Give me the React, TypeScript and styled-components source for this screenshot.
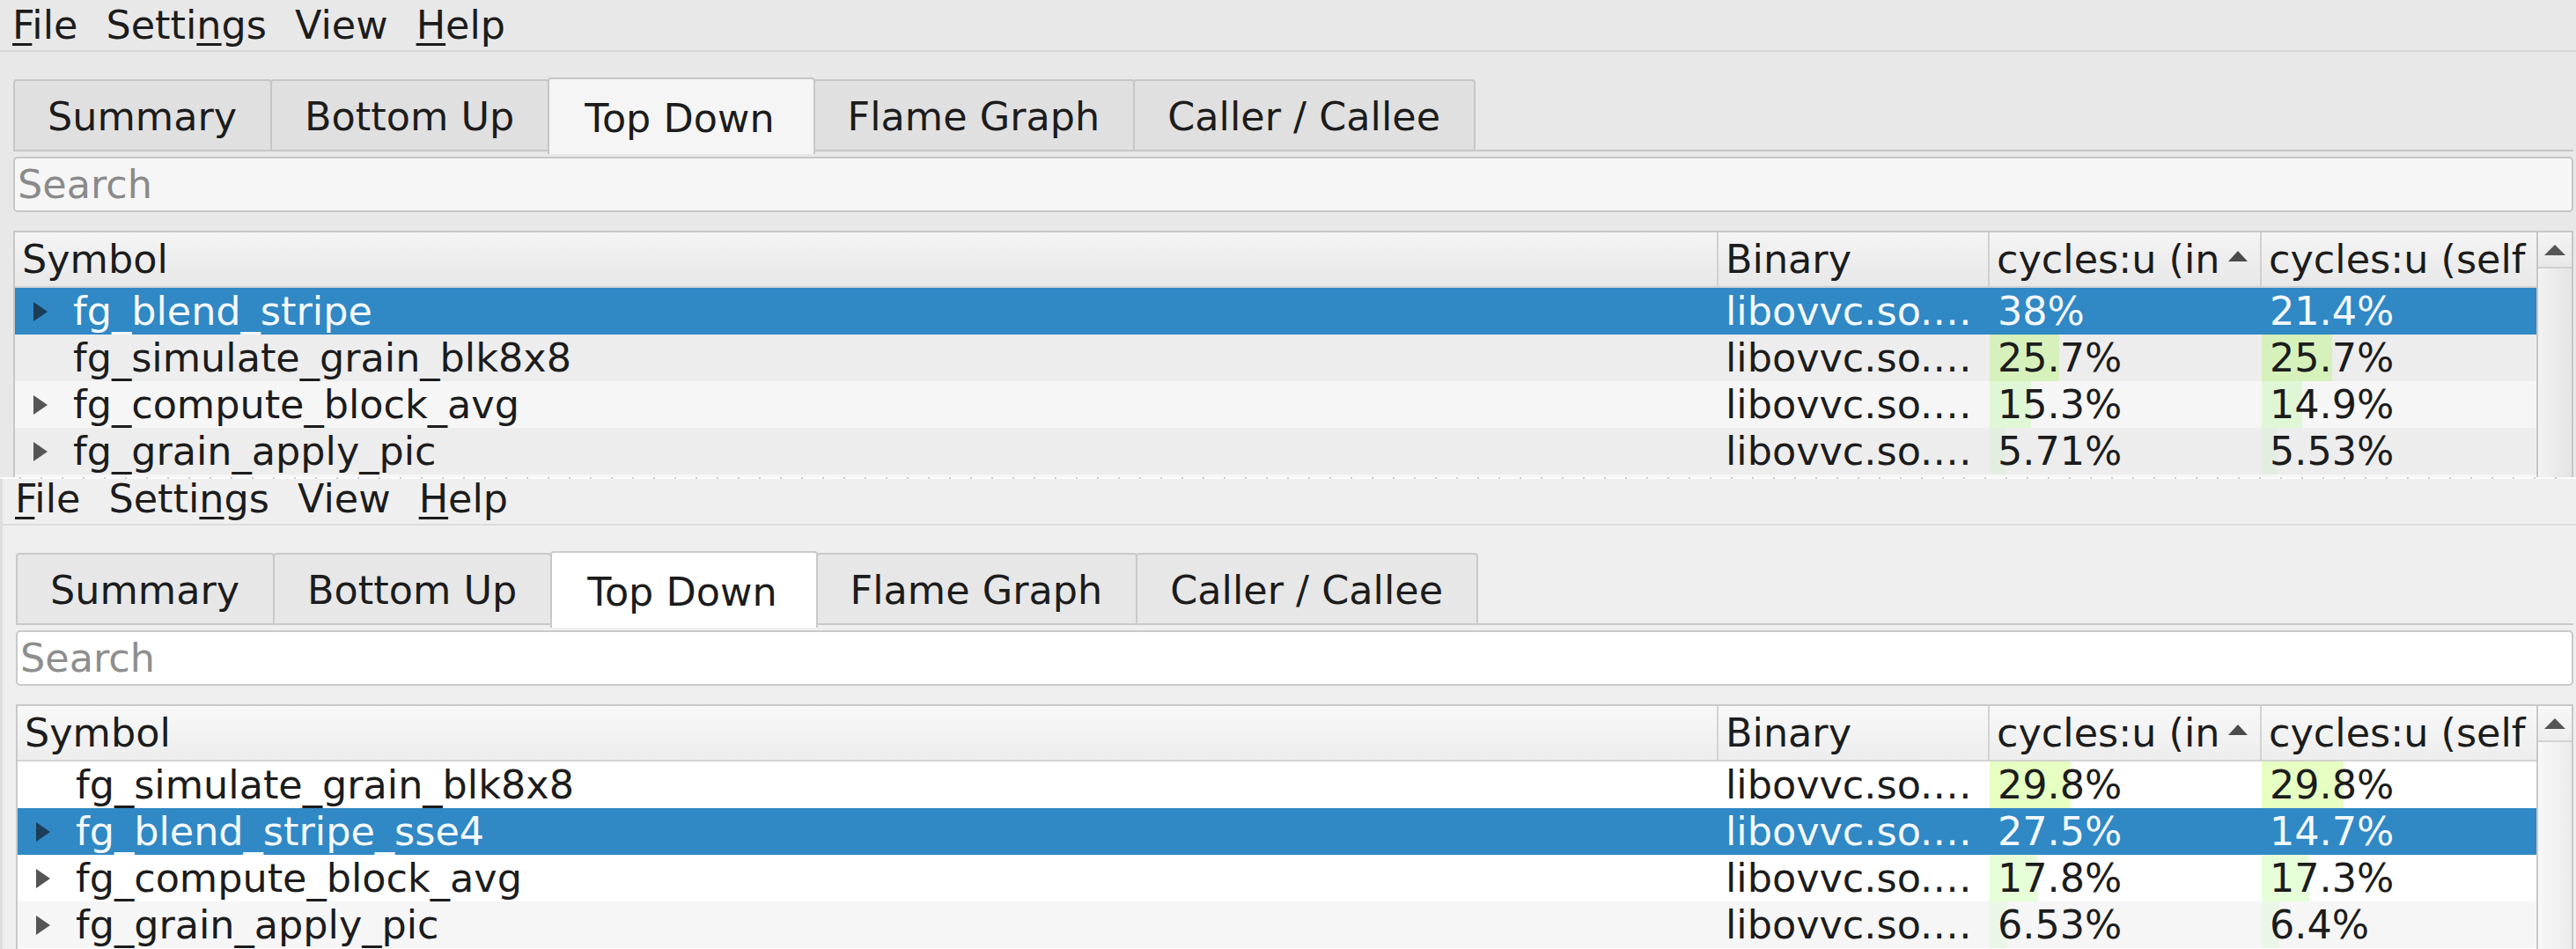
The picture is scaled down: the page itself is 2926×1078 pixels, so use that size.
import React from "react";
import styled, { createGlobalStyle, ThemeProvider } from "styled-components";

type Palette = {
  bg: string;
  menuLine: string;
  tab: string;
  tabActive: string;
  frame: string;
  search: string;
  placeholder: string;
  headTop: string;
  headBottom: string;
  divider: string;
  rowBase: string;
  rowAlt: string;
  text: string;
  trackA: string;
  trackB: string;
};

const dimPalette: Palette = {
  bg: "#e8e8e8",
  menuLine: "#d6d6d6",
  tab: "#e0e0e0",
  tabActive: "#f5f5f5",
  frame: "#c6c6c6",
  search: "#f6f6f6",
  placeholder: "#8a8a8a",
  headTop: "#f4f4f4",
  headBottom: "#e8e8e8",
  divider: "#d0d0d0",
  rowBase: "#f6f6f6",
  rowAlt: "#ededed",
  text: "#1c1c1c",
  trackA: "#f2f2f2",
  trackB: "#e4e4e4",
};

const brightPalette: Palette = {
  bg: "#efefef",
  menuLine: "#dcdcdc",
  tab: "#e7e7e7",
  tabActive: "#ffffff",
  frame: "#c9c9c9",
  search: "#ffffff",
  placeholder: "#8e8e8e",
  headTop: "#f8f8f8",
  headBottom: "#ededed",
  divider: "#d3d3d3",
  rowBase: "#ffffff",
  rowAlt: "#f6f6f6",
  text: "#1c1c1c",
  trackA: "#f8f8f8",
  trackB: "#ececec",
};

const GlobalStyle = createGlobalStyle`
  * { box-sizing: border-box; }
  html, body { margin: 0; padding: 0; background: #efefef; }
  body {
    width: 2926px;
    height: 1078px;
    overflow: hidden;
    font-family: "DejaVu Sans", "Liberation Sans", sans-serif;
    font-size: 44.5px;
  }
`;

const Page = styled.div`
  width: 2926px;
  height: 1078px;
  display: flex;
  flex-direction: column;
  overflow: hidden;
  background: #efefef;
`;

const PaneClip = styled.div<{ $height: number; $inset?: boolean }>`
  height: ${(p) => p.$height}px;
  overflow: hidden;
  flex-shrink: 0;
  border-left: ${(p) => (p.$inset ? "3px solid #dddddd" : "none")};
`;

const Seam = styled.div`
  height: 2px;
  flex-shrink: 0;
  background: repeating-linear-gradient(
    90deg,
    #fbfbfb 0 22px,
    #cdcdcd 22px 24px
  );
`;

const WindowFrame = styled.div<{ $shift: number }>`
  margin-top: ${(p) => p.$shift}px;
  display: flex;
  flex-direction: column;
  background: ${(p) => p.theme.bg};
  color: ${(p) => p.theme.text};
  font-family: "DejaVu Sans", "Liberation Sans", sans-serif;
  font-size: 44.5px;
`;

const MenuBar = styled.div`
  height: 59px;
  display: flex;
  align-items: center;
  line-height: 57px;
  padding-left: 0;
  border-bottom: 2px solid ${(p) => p.theme.menuLine};
`;

const MenuItem = styled.span`
  padding: 0 16px;
  white-space: nowrap;
  &:first-child {
    padding-left: 14px;
  }
`;

const Mnemonic = styled.span`
  text-decoration: underline;
  text-decoration-thickness: 3px;
  text-underline-offset: 5px;
`;

const Body = styled.div`
  display: flex;
  flex-direction: column;
  padding: 0 3px 0 15px;
`;

const TabBar = styled.div`
  display: flex;
  align-items: flex-start;
  padding-top: 31px;
  height: 116px;
`;

const Tab = styled.div<{ $active?: boolean }>`
  position: relative;
  flex-shrink: 0;
  height: ${(p) => (p.$active ? 87 : 82)}px;
  margin-top: ${(p) => (p.$active ? -2 : 0)}px;
  padding: ${(p) => (p.$active ? "4px 44px 0 40px" : "3px 38px 0 37px")};
  display: flex;
  align-items: center;
  white-space: nowrap;
  background: ${(p) => (p.$active ? p.theme.tabActive : p.theme.tab)};
  border: 2px solid ${(p) => p.theme.frame};
  border-bottom: ${(p) => (p.$active ? "none" : `2px solid ${p.theme.frame}`)};
  border-radius: 4px 4px 0 0;
  z-index: ${(p) => (p.$active ? 1 : 0)};
  & + & {
    margin-left: -2px;
  }
`;

const TabFiller = styled.div`
  flex: 1;
  height: 82px;
  border-bottom: 2px solid ${(p) => p.theme.frame};
`;

const SearchField = styled.input`
  margin-top: 3px;
  height: 63px;
  width: 100%;
  border: 2px solid ${(p) => p.theme.frame};
  border-radius: 5px;
  background: ${(p) => p.theme.search};
  padding: 0 3px;
  font-family: "DejaVu Sans", "Liberation Sans", sans-serif;
  font-size: 44.5px;
  color: ${(p) => p.theme.text};
  outline: none;
  &::placeholder {
    color: ${(p) => p.theme.placeholder};
  }
`;

const TableFrame = styled.div`
  margin-top: 21px;
  display: flex;
  border-top: 2px solid ${(p) => p.theme.frame};
  border-left: 2px solid ${(p) => p.theme.frame};
  height: 330px;
`;

const TreeView = styled.div`
  flex: 1;
  min-width: 0;
  display: flex;
  flex-direction: column;
  background: ${(p) => p.theme.rowBase};
`;

const columns = "minmax(0, 1fr) 308px 309px 312px";

const HeaderRow = styled.div`
  display: grid;
  grid-template-columns: ${columns};
  height: 63px;
  border-bottom: 2px solid ${(p) => p.theme.divider};
  background: linear-gradient(${(p) => p.theme.headTop}, ${(p) => p.theme.headBottom});
`;

const HeaderCell = styled.div`
  display: flex;
  align-items: center;
  justify-content: space-between;
  padding-left: 8px;
  white-space: nowrap;
  overflow: hidden;
  border-right: 2px solid ${(p) => p.theme.divider};
  &:last-child {
    border-right: none;
  }
`;

const SortArrow = styled.span`
  align-self: flex-start;
  margin-top: 21px;
  margin-right: 14px;
  width: 0;
  height: 0;
  border-left: 11px solid transparent;
  border-right: 11px solid transparent;
  border-bottom: 12px solid #4b4b4b;
  flex-shrink: 0;
`;

const Row = styled.div<{ $alt: boolean; $selected: boolean }>`
  display: grid;
  grid-template-columns: ${columns};
  height: 53px;
  line-height: 53px;
  flex-shrink: 0;
  background: ${(p) =>
    p.$selected ? "#3088c5" : p.$alt ? p.theme.rowAlt : p.theme.rowBase};
  color: ${(p) => (p.$selected ? "#f4f9fd" : p.theme.text)};
`;

const SymbolCell = styled.div`
  display: flex;
  align-items: center;
  white-space: nowrap;
  overflow: hidden;
`;

const BranchSlot = styled.span`
  width: 66px;
  flex-shrink: 0;
  display: flex;
  align-items: center;
  padding-left: 21px;
  height: 100%;
`;

const BranchArrow = styled.span<{ $selected: boolean }>`
  width: 0;
  height: 0;
  border-top: 11px solid transparent;
  border-bottom: 11px solid transparent;
  border-left: 16px solid ${(p) => (p.$selected ? "#1c3d58" : "#555555")};
`;

const TextCell = styled.div`
  padding-left: 8px;
  white-space: nowrap;
  overflow: hidden;
`;

const barColor = (f: number) => {
  const hue = 120 - f * 120;
  const alpha = ((1 - (f - 1) * (f - 1)) * 120) / 255;
  return `hsla(${hue.toFixed(1)}, 100%, 50%, ${alpha.toFixed(3)})`;
};

const CostCell = styled.div<{ $fraction: number; $selected: boolean }>`
  padding-left: 9px;
  white-space: nowrap;
  overflow: hidden;
  background: ${(p) =>
    p.$selected
      ? "transparent"
      : `linear-gradient(${barColor(p.$fraction)}, ${barColor(
          p.$fraction
        )}) 0 0 / ${(p.$fraction * 100).toFixed(2)}% 100% no-repeat`};
`;

const ScrollBar = styled.div`
  width: 42px;
  flex-shrink: 0;
  display: flex;
  flex-direction: column;
  border-left: 2px solid ${(p) => p.theme.frame};
  border-right: 2px solid ${(p) => p.theme.frame};
  background: linear-gradient(90deg, ${(p) => p.theme.trackA}, ${(p) => p.theme.trackB});
`;

const ScrollButton = styled.div`
  height: 41px;
  display: flex;
  align-items: center;
  justify-content: center;
  border-bottom: 2px solid ${(p) => p.theme.divider};
  background: linear-gradient(${(p) => p.theme.headTop}, ${(p) => p.theme.headBottom});
`;

const UpArrow = styled.span`
  width: 0;
  height: 0;
  border-left: 12px solid transparent;
  border-right: 12px solid transparent;
  border-bottom: 12px solid #555555;
`;

type RowData = {
  symbol: string;
  branch: boolean;
  selected?: boolean;
  incl: string;
  self: string;
};

const pct = (s: string) => parseFloat(s) / 100;

const topRows: RowData[] = [
  { symbol: "fg_blend_stripe", branch: true, selected: true, incl: "38%", self: "21.4%" },
  { symbol: "fg_simulate_grain_blk8x8", branch: false, incl: "25.7%", self: "25.7%" },
  { symbol: "fg_compute_block_avg", branch: true, incl: "15.3%", self: "14.9%" },
  { symbol: "fg_grain_apply_pic", branch: true, incl: "5.71%", self: "5.53%" },
];

const bottomRows: RowData[] = [
  { symbol: "fg_simulate_grain_blk8x8", branch: false, incl: "29.8%", self: "29.8%" },
  { symbol: "fg_blend_stripe_sse4", branch: true, selected: true, incl: "27.5%", self: "14.7%" },
  { symbol: "fg_compute_block_avg", branch: true, incl: "17.8%", self: "17.3%" },
  { symbol: "fg_grain_apply_pic", branch: true, incl: "6.53%", self: "6.4%" },
];

const tabs = ["Summary", "Bottom Up", "Top Down", "Flame Graph", "Caller / Callee"];

function HotspotWindow({
  palette,
  rows,
  shift,
}: {
  palette: Palette;
  rows: RowData[];
  shift: number;
}) {
  return (
    <ThemeProvider theme={palette}>
      <WindowFrame $shift={shift}>
        <MenuBar>
          <MenuItem>
            <Mnemonic>F</Mnemonic>ile
          </MenuItem>
          <MenuItem>
            Setti<Mnemonic>n</Mnemonic>gs
          </MenuItem>
          <MenuItem>View</MenuItem>
          <MenuItem>
            <Mnemonic>H</Mnemonic>elp
          </MenuItem>
        </MenuBar>
        <Body>
          <TabBar>
            {tabs.map((t) => (
              <Tab key={t} $active={t === "Top Down"}>
                {t}
              </Tab>
            ))}
            <TabFiller />
          </TabBar>
          <SearchField placeholder="Search" readOnly />
          <TableFrame>
            <TreeView>
              <HeaderRow>
                <HeaderCell>Symbol</HeaderCell>
                <HeaderCell>Binary</HeaderCell>
                <HeaderCell>
                  <span>cycles:u (in</span>
                  <SortArrow />
                </HeaderCell>
                <HeaderCell>cycles:u (self</HeaderCell>
              </HeaderRow>
              {rows.map((r, i) => (
                <Row key={r.symbol} $alt={i % 2 === 1} $selected={!!r.selected}>
                  <SymbolCell>
                    <BranchSlot>
                      {r.branch && <BranchArrow $selected={!!r.selected} />}
                    </BranchSlot>
                    {r.symbol}
                  </SymbolCell>
                  <TextCell>libovvc.so.…</TextCell>
                  <CostCell $fraction={pct(r.incl)} $selected={!!r.selected}>
                    {r.incl}
                  </CostCell>
                  <CostCell $fraction={pct(r.self)} $selected={!!r.selected}>
                    {r.self}
                  </CostCell>
                </Row>
              ))}
            </TreeView>
            <ScrollBar>
              <ScrollButton>
                <UpArrow />
              </ScrollButton>
            </ScrollBar>
          </TableFrame>
        </Body>
      </WindowFrame>
    </ThemeProvider>
  );
}

export default function App() {
  return (
    <>
      <GlobalStyle />
      <Page>
        <PaneClip $height={542}>
          <HotspotWindow palette={dimPalette} rows={topRows} shift={0} />
        </PaneClip>
        <Seam />
        <PaneClip $height={534} $inset>
          <HotspotWindow palette={brightPalette} rows={bottomRows} shift={-6} />
        </PaneClip>
      </Page>
    </>
  );
}
